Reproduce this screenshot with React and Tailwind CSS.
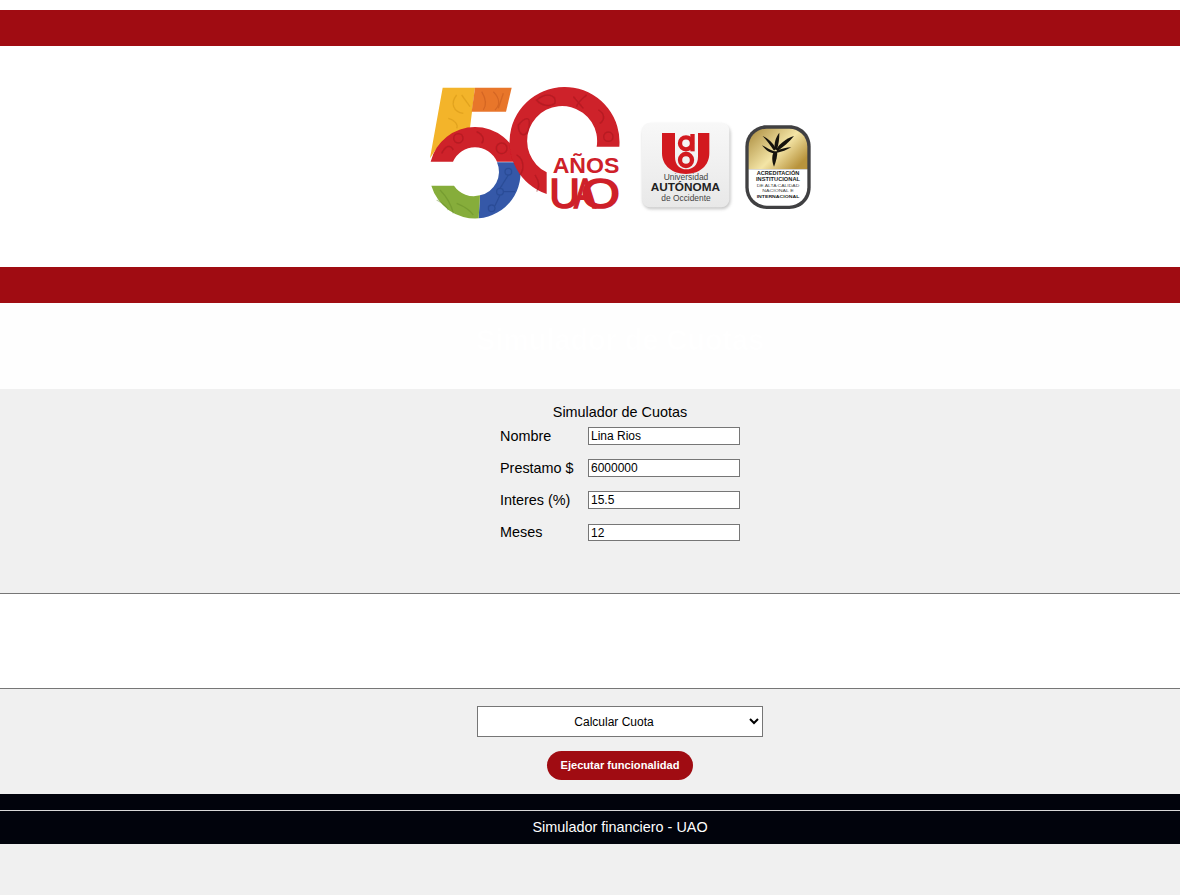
import React from 'react';

const Logo = () => (
  <svg width="460" height="155" viewBox="-180 0 1380 465" className="block">
    <defs>
      <linearGradient id="badgeBg" x1="0" y1="0" x2="0" y2="1">
        <stop offset="0" stopColor="#f8f8f8" />
        <stop offset="1" stopColor="#e8e8e8" />
      </linearGradient>
      <linearGradient id="gold" x1="0" y1="0" x2="1" y2="0.7">
        <stop offset="0" stopColor="#a98a3c" />
        <stop offset="0.6" stopColor="#f4e5a6" />
        <stop offset="1" stopColor="#b8933c" />
      </linearGradient>
      <filter id="soft"><feGaussianBlur stdDeviation="5" /></filter>
      <filter id="tiny"><feGaussianBlur stdDeviation="0.6" /></filter>
    </defs>

    {/* 50 */}
    <g filter="url(#tiny)">
      <path d="M68 38H165L150 158C105 165 62 195 30 250Z" fill="#f3b429" />
      <path d="M165 38H275L258 110H155Z" fill="#e8762b" />
      <path d="M32 260A137 137 0 0 1 298 260H231A72 72 0 0 0 99 260Z" fill="#ce2029" />
      <path d="M231 262H298A137 137 0 0 1 176 430L180 361A72 72 0 0 0 231 262Z" fill="#3458a8" />
      <path d="M34 332H102A72 72 0 0 0 180 361L176 430A137 137 0 0 1 34 332Z" fill="#86ad3a" />
      <path d="M380 357A165 165 0 1 1 598 215H530A105 105 0 1 0 380 292Z" fill="#ce2029" />
      {/* textura */}
      <g fill="none" strokeWidth="4" opacity="0.4">
        <g stroke="#c98a12">
          <path d="M110 60C90 85 100 110 130 115M85 130C105 135 115 150 110 160M125 60L150 95" />
        </g>
        <g stroke="#b9501a">
          <path d="M185 50C200 75 200 90 190 105M220 50C240 70 240 90 225 105M250 55L235 100" />
        </g>
        <g stroke="#8f141b">
          <circle cx="115" cy="190" r="14" />
          <circle cx="245" cy="220" r="16" />
          <path d="M65 235C75 215 90 205 100 225M170 170C190 180 195 195 185 205" />
          <path d="M350 75C380 50 410 60 405 85C395 95 365 95 350 75Z" />
          <path d="M460 65L490 100M500 60C480 75 470 90 470 95M535 105C555 115 555 135 540 145" />
          <path d="M295 150C320 120 335 125 325 165C315 190 295 180 295 150Z" />
          <circle cx="565" cy="185" r="14" />
          <path d="M290 240C310 250 315 280 300 300M345 300C355 315 360 335 350 350" />
        </g>
        <g stroke="#1f3c7e">
          <circle cx="265" cy="290" r="10" />
          <circle cx="240" cy="350" r="10" />
          <circle cx="215" cy="400" r="10" />
          <path d="M265 300L240 340M250 350H285M225 392L240 360" />
        </g>
        <g stroke="#5f8524">
          <path d="M60 345C85 370 95 395 100 415M110 385C135 395 150 405 160 420M50 375C70 385 80 395 85 405" />
        </g>
      </g>
    </g>
    <g fontFamily="'Liberation Sans', sans-serif" fill="#ce2029">
      <text x="398" y="294" fontWeight="700" fontSize="66" textLength="200" lengthAdjust="spacingAndGlyphs">AÑOS</text>
      <g fontSize="130" stroke="#ce2029" strokeWidth="5">
        <text x="388" y="398" textLength="92" lengthAdjust="spacingAndGlyphs">U</text>
        <text x="462" y="398" textLength="66" lengthAdjust="spacingAndGlyphs">A</text>
        <text x="484" y="398" textLength="116" lengthAdjust="spacingAndGlyphs">O</text>
      </g>
    </g>

    <g transform="translate(630 105)">
      {/* escudo UAO */}
      <rect x="38" y="44" width="264" height="254" rx="26" fill="#9a9a9a" opacity="0.55" filter="url(#soft)" />
      <rect x="36" y="38" width="262" height="254" rx="24" fill="url(#badgeBg)" />
      <path d="M96 69H135V140C135 165 150 178 169 178C188 178 204 165 204 140V69H238V130C238 168 208 192 168 192C128 192 96 168 96 130Z" fill="#d2191f" />
      <circle cx="168" cy="100" r="18" fill="none" stroke="#d2191f" strokeWidth="13" />
      <rect x="181" y="72" width="13" height="52" fill="#d2191f" />
      <circle cx="168" cy="150" r="18" fill="none" stroke="#d2191f" strokeWidth="13" />
      <g fontFamily="'Liberation Sans', sans-serif" textAnchor="middle">
        <text x="168" y="209" fontSize="25" fill="#444" textLength="134" lengthAdjust="spacingAndGlyphs">Universidad</text>
        <text x="166" y="243" fontSize="31" fontWeight="700" fill="#222" textLength="208" lengthAdjust="spacingAndGlyphs">AUTÓNOMA</text>
        <text x="168" y="272" fontSize="25" fill="#444" textLength="148" lengthAdjust="spacingAndGlyphs">de Occidente</text>
      </g>

      {/* sello acreditación */}
      <path d="M346 110C346 72 375 46 410 46H478C513 46 542 72 542 110V232C542 270 513 297 478 297H410C375 297 346 270 346 232Z" fill="#404042" />
      <path d="M356 178V110C356 78 382 56 410 56H478C506 56 532 78 532 110V178Z" fill="url(#gold)" />
      <path d="M356 178H532V232C532 264 506 287 478 287H410C382 287 356 264 356 232Z" fill="#fff" />
      <g fill="#15130d">
        <path d="M432 122C420 105 410 90 398 78C415 86 430 100 438 116Z" />
        <path d="M434 118C432 100 436 84 448 68C448 86 446 104 440 120Z" />
        <path d="M438 118C450 100 468 86 492 78C478 96 460 110 442 124Z" />
        <path d="M440 122C455 116 470 112 484 112C470 120 455 126 442 128Z" />
        <path d="M432 124C420 120 408 112 396 106C410 124 422 130 434 130Z" />
        <path d="M432 124C426 136 424 150 432 170C440 150 442 136 442 124Z" />
      </g>
      <g fontFamily="'Liberation Sans', sans-serif" textAnchor="middle" fill="#1a1a1a">
        <text x="444" y="196" fontSize="14" fontWeight="700" textLength="128" lengthAdjust="spacingAndGlyphs">ACREDITACIÓN</text>
        <text x="444" y="213" fontSize="14" fontWeight="700" textLength="132" lengthAdjust="spacingAndGlyphs">INSTITUCIONAL</text>
        <text x="444" y="232" fontSize="13" fill="#444" textLength="128" lengthAdjust="spacingAndGlyphs">DE ALTA CALIDAD</text>
        <text x="444" y="247" fontSize="13" fill="#444" textLength="94" lengthAdjust="spacingAndGlyphs">NACIONAL E</text>
        <text x="444" y="263" fontSize="13" fontWeight="700" textLength="128" lengthAdjust="spacingAndGlyphs">INTERNACIONAL</text>
      </g>
    </g>
  </svg>
);

const campos = [
  { label: 'Nombre', valor: 'Lina Rios' },
  { label: 'Prestamo $', valor: '6000000' },
  { label: 'Interes (%)', valor: '15.5' },
  { label: 'Meses', valor: '12' },
];

const App = () => {
  return (
    <div className="min-h-[895px] bg-white pt-[10px] font-['Liberation_Sans',Arial,sans-serif] text-black">
      <div className="h-[36px] bg-[#a00c12]" />

      {/* Logos */}
      <div className="flex h-[221px] justify-center pt-[29px]">
        <Logo />
      </div>

      <div className="h-[36px] bg-[#a00c12]" />

      {/* Titulo, blanco sobre casi blanco */}
      <div className="h-[86px] bg-[#fefefe] pl-[60px] pt-[21px]">
        <h1 className="text-center text-[28.8px] font-bold leading-[33px] text-white">Simulador de Cuotas</h1>
      </div>

      {/* Formulario */}
      <div className="h-[204px] bg-[#f0f0f0] pl-[60px] pt-[15px]">
        <p className="text-center text-[14.4px] leading-[17px]">Simulador de Cuotas</p>
        <div className="mx-auto mt-[6px] flex w-[240px] flex-col gap-[14px]">
          {campos.map((campo) => (
            <div key={campo.label} className="group flex h-[18px] items-center last:mt-[1px] last:h-[17px]">
              <label className="w-[88px] pt-[2px] text-[14.4px] group-last:pt-0">{campo.label}</label>
              <input
                type="text"
                defaultValue={campo.valor}
                className="h-full w-[152px] border border-[#767676] bg-white px-[2px] text-[12px]"
              />
            </div>
          ))}
        </div>
      </div>

      <div className="h-[96px] border-y border-[#767676] bg-white" />

      {/* Funcionalidad */}
      <div className="flex h-[105px] flex-col items-center bg-[#f0f0f0] pl-[60px] pt-[17px]">
        <select className="h-[31px] w-[286px] border border-[#767676] bg-white text-center text-[12px]">
          <option>Calcular Cuota</option>
          <option>Calcular Total</option>
        </select>
        <button className="mt-[14px] h-[29px] w-[146px] rounded-full bg-[#a00c12] text-[11.1px] font-bold text-white">
          Ejecutar funcionalidad
        </button>
      </div>

      {/* Pie */}
      <div className="h-[16px] bg-[#01030c]" />
      <div className="h-px bg-[#d8d8d8]" />
      <div className="flex h-[33px] items-center justify-center bg-[#01030c] pl-[60px] text-[14.4px] text-white">
        Simulador financiero - UAO
      </div>
      <div className="h-[51px] bg-[#f0f0f0]" />
    </div>
  );
};

export default App;
